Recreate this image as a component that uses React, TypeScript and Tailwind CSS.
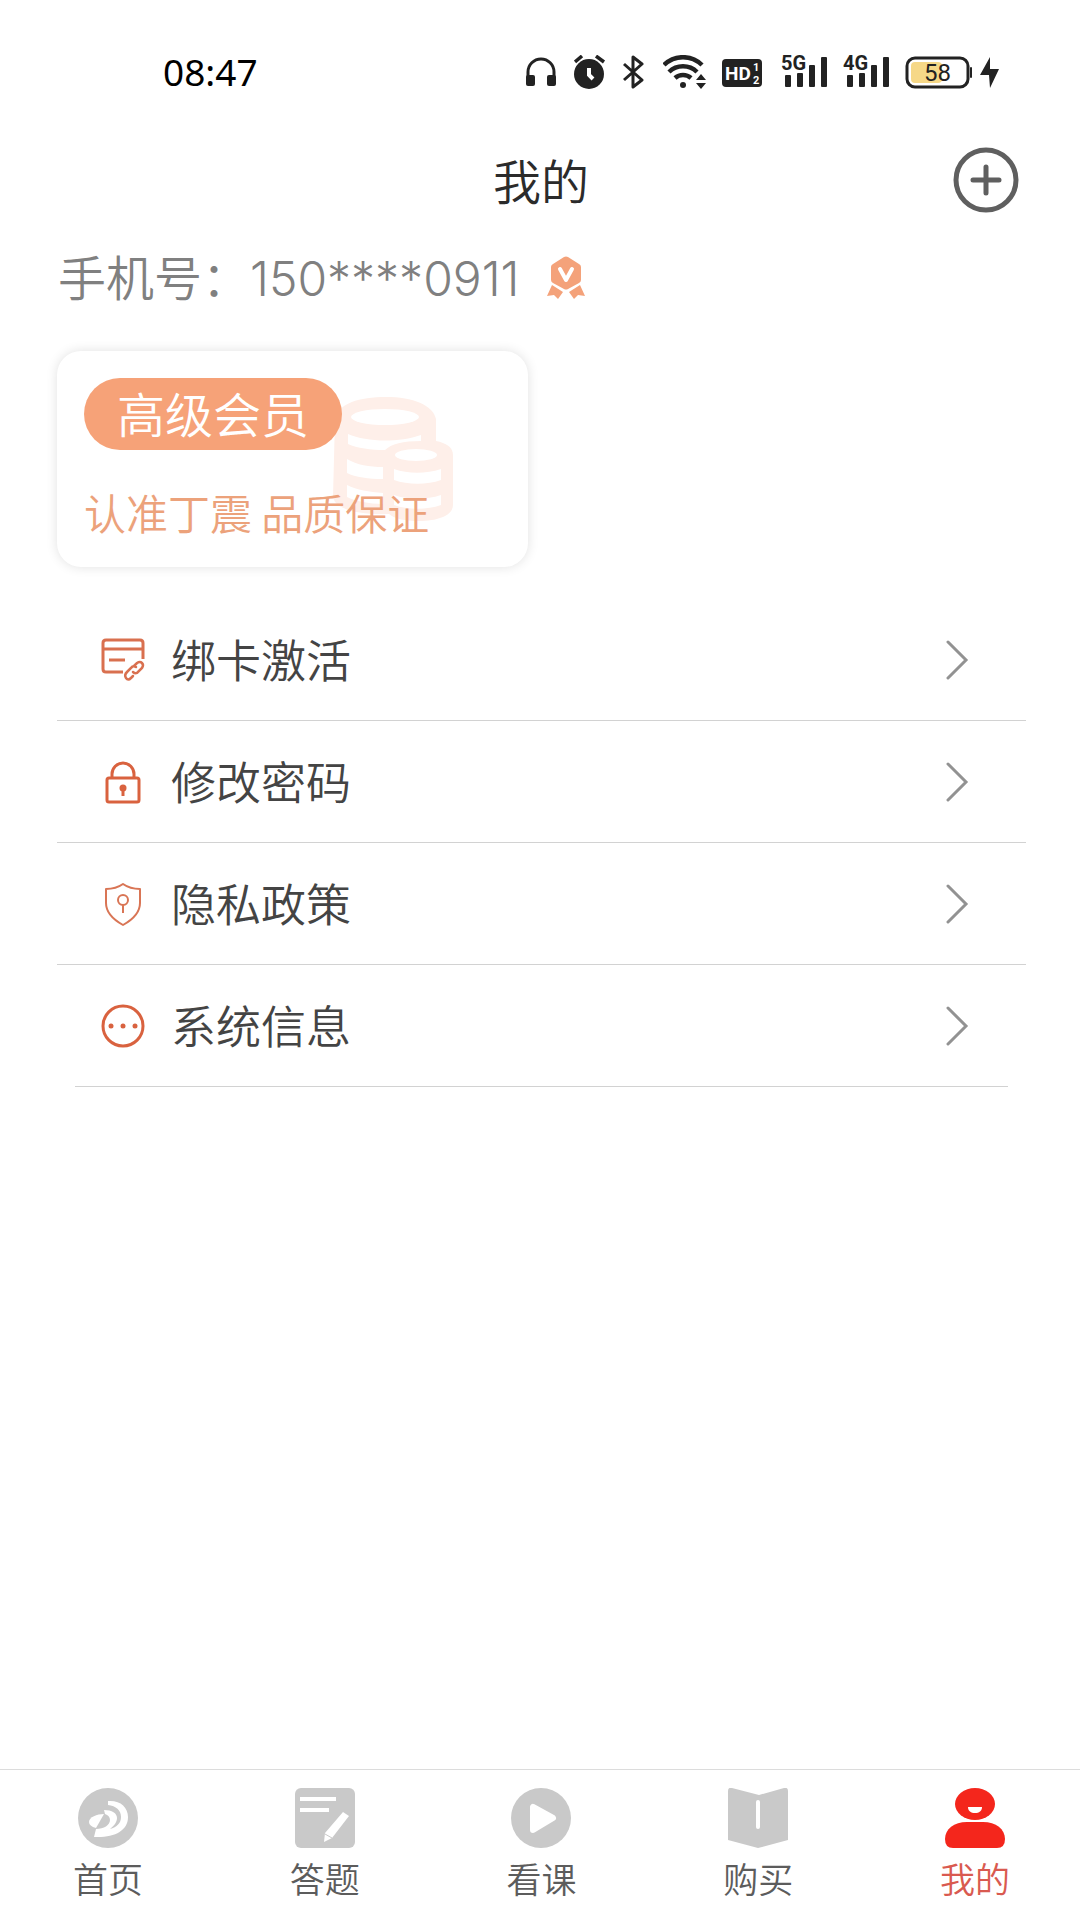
import type { ReactNode } from "react"

const StatusBar = () => {
  return (
    <div className="flex h-[42px] items-center justify-between pl-[163px] pr-20 text-[#222]">
      <span className="font-['Noto_Sans'] text-[37px] leading-[42px] font-normal text-black">08:47</span>
      <div className="flex items-center gap-4">
        <svg width="32" height="34" viewBox="0 0 32 34" fill="none">
          <path d="M2 24V17a13 13 0 0 1 26 0v7" stroke="currentColor" strokeWidth="3" />
          <rect x="0" y="20" width="9" height="11" rx="2" fill="currentColor" />
          <rect x="21" y="20" width="9" height="11" rx="2" fill="currentColor" />
        </svg>
        <svg width="33" height="34" viewBox="0 0 33 34" fill="none">
          <circle cx="15" cy="19" r="15" fill="currentColor" />
          <path d="M1 7l7-6M22 1l8 6" stroke="currentColor" strokeWidth="3.5" />
          <path d="M15 13v7l4 4" stroke="#fff" strokeWidth="4" />
        </svg>
        <svg width="24" height="34" viewBox="0 0 24 34" fill="none" stroke="currentColor" strokeWidth="3">
          <path d="M1 9l18 16-9 7V2l9 7L1 25" strokeLinejoin="round" />
        </svg>
        <svg width="43" height="34" viewBox="0 0 43 34" fill="none" stroke="currentColor" strokeWidth="4.5">
          <path d="M1 10a27 27 0 0 1 38 0M6 17a20 20 0 0 1 28 0M12 23a12 12 0 0 1 16 0" />
          <circle cx="20" cy="30" r="3" fill="currentColor" stroke="none" />
          <path d="M38 19l5 6H33zM38 34l-5-6h10z" fill="currentColor" stroke="none" />
        </svg>
        <svg width="43" height="34" viewBox="0 0 43 34" className="font-['Roboto'] font-bold" fill="#fff">
          <rect x="0" y="4" width="40" height="28" rx="4" fill="currentColor" />
          <text x="3" y="25" fontSize="19">HD</text>
          <text x="31" y="16" fontSize="11">1</text>
          <text x="31" y="29" fontSize="11">2</text>
        </svg>
        <Signal label="5G" />
        <Signal label="4G" />
        <div className="flex items-center gap-2">
          <svg width="67" height="34" viewBox="0 0 67 34" fill="none" className="font-['Roboto'] font-normal">
            <rect x="2" y="3" width="61" height="29" rx="8" stroke="currentColor" strokeWidth="3" />
            <rect x="6" y="7" width="31" height="21" rx="4" fill="#f6d887" />
            <rect x="65" y="12" width="2" height="11" rx="1" fill="currentColor" />
            <text x="19" y="26" fontSize="24" fill="#222">58</text>
          </svg>
          <svg width="20" height="34" viewBox="0 0 20 34" fill="currentColor">
            <path d="M10 2L0 20h9l1 13 9-19h-9z" />
          </svg>
        </div>
      </div>
    </div>
  )
}

const Signal = ({ label }: { label: string }) => {
  return (
    <svg width="46" height="42" viewBox="0 -4 46 42" fill="currentColor" className="font-['Roboto'] font-bold">
      <text x="0" y="15" fontSize="20">{label}</text>
      <rect x="4" y="20" width="6" height="12" rx="1" />
      <rect x="16" y="18" width="6" height="14" rx="1" />
      <rect x="28" y="10" width="6" height="22" rx="1" />
      <rect x="40" y="2" width="6" height="30" rx="1" />
    </svg>
  )
}

const Medal = () => {
  return (
    <svg width="38" height="43" viewBox="0 0 38 43" fill="#f4a27a" className="mt-1">
      <path d="M17 1q2-1 4 0l11 7q2 1 2 3v13q0 2-2 3l-11 6q-2 1-4 0L6 27q-2-1-2-3V11q0-2 2-3z" />
      <path d="M5 29l11 7-5 7-4-4-7 1zM33 29l-11 7 5 7 4-4 7 1z" />
      <path d="M13 13l6 11 6-11" fill="none" stroke="#fff" strokeWidth="4" strokeLinecap="round" strokeLinejoin="round" />
    </svg>
  )
}

const Coins = () => {
  return (
    <svg width="120" height="126" viewBox="0 0 120 126" fill="#feefe9" className="absolute left-[276px] top-[46px]">
      <path d="M2 22C6 6 26 0 53 0s47 8 50 22v22c10 2 17 6 17 14v50c0 10-14 16-34 16-14 0-24-2-30-7C24 118 2 112 0 100z" />
      <g fill="#fff">
        <ellipse cx="52" cy="20" rx="34" ry="8" />
        <path d="M15 37c18 8 50 9 73 1v6c-18 0-30 3-36 9-14 0-28-2-37-6z" />
        <path d="M14 62c10 6 22 8 36 8v12c-14 0-28-2-36-6zM14 88c10 5 22 7 36 8v11c-14 0-28-3-36-7z" />
        <ellipse cx="83" cy="58" rx="21" ry="6" />
        <path d="M61 72c14 5 32 5 47 0v11c-14 5-33 5-47 0zM61 98c14 5 32 5 47 0v10c-14 5-33 5-47 0z" />
      </g>
    </svg>
  )
}

const CardLinkIcon = () => (
  <svg width="48" height="48" viewBox="0 0 48 48" fill="none" stroke="#d9704f" strokeWidth="3">
    <path d="M24 36H7q-3 0-3-3V7q0-3 3-3h34q3 0 3 3v16M4 13h40M10 24h16" />
    <path d="M35 30l3-3q3-2 5 0t0 5l-5 5q-2 1-4-1M37 31q-3-2-5 1l-4 4q-3 3-1 6t5 0l2-2" strokeWidth="2.5" strokeLinecap="round" />
  </svg>
)

const LockIcon = () => (
  <svg width="48" height="48" viewBox="0 0 48 48" fill="none" stroke="#d9623f" strokeWidth="3">
    <path d="M13 20v-4a11 11 0 0 1 22 0v4" />
    <rect x="8" y="20" width="32" height="24" rx="2" />
    <circle cx="24" cy="30" r="3.5" fill="#d9623f" stroke="none" />
    <path d="M24 30v8" />
  </svg>
)

const ShieldIcon = () => (
  <svg width="48" height="48" viewBox="0 0 48 48" fill="none" stroke="#d97555" strokeWidth="2">
    <path d="M24 4q7 5 17 5v14c0 10-8 17-17 22C15 40 7 33 7 23V9q10 0 17-5z" strokeLinejoin="round" />
    <circle cx="24" cy="20" r="5" />
    <path d="M24 25v8" />
  </svg>
)

const DotsIcon = () => (
  <svg width="48" height="48" viewBox="0 0 48 48" fill="#d9623f">
    <circle cx="24" cy="24" r="20" fill="none" stroke="#d9623f" strokeWidth="3" />
    <circle cx="12" cy="24" r="2.5" />
    <circle cx="24" cy="24" r="2.5" />
    <circle cx="36" cy="24" r="2.5" />
  </svg>
)

const MenuRow = ({ icon, label }: { icon: ReactNode; label: string }) => {
  return (
    <button type="button" className="flex h-[121px] w-full items-center gap-6 pl-[42px] pr-[57px] text-left">
      {icon}
      <span className="flex-1 pb-0.5 text-[45px] leading-[60px] text-[#444]">{label}</span>
      <svg width="24" height="40" viewBox="0 0 24 40" fill="none" stroke="#929292" strokeWidth="3" strokeLinecap="round">
        <path d="M3 2l18 18L3 38" />
      </svg>
    </button>
  )
}

const menu = [
  { label: "绑卡激活", icon: <CardLinkIcon /> },
  { label: "修改密码", icon: <LockIcon /> },
  { label: "隐私政策", icon: <ShieldIcon /> },
  { label: "系统信息", icon: <DotsIcon /> },
]

const tabs = [
  {
    label: "首页",
    icon: (
      <>
        <circle cx="30" cy="30" r="30" />
        <path d="M30 13c12-1 20 6 20 16 0 14-14 21-34 20l2-8c8 0 14-4 14-9 0-3-2-5-5-6l-1-4c8 0 13 3 13 8 0 4-3 8-7 11 7-2 11-6 11-12 0-7-5-11-13-12z" fill="#fff" />
        <path d="M26 26l-8 14q-7-2-7-6c0-5 8-8 15-8z" fill="#fff" />
      </>
    ),
  },
  {
    label: "答题",
    icon: (
      <>
        <rect width="60" height="60" rx="6" />
        <path d="M5 9h36v4H5zM5 20h29v4H5zM48 24l6 4-17 22-8 4 1-9z" fill="#fff" />
        <path d="M30 46l7 4" stroke="#c9c9c9" />
      </>
    ),
  },
  {
    label: "看课",
    icon: (
      <>
        <circle cx="30" cy="30" r="30" />
        <path d="M22 19v23l20-12z" fill="#fff" stroke="#fff" strokeWidth="6" strokeLinejoin="round" />
      </>
    ),
  },
  {
    label: "购买",
    icon: (
      <>
        <path d="M0 3q0-4 4-3l27 7 25-7q4-1 4 3v49l-30 8-30-8z" />
        <path d="M30 14v25" stroke="#fff" strokeWidth="4" strokeLinecap="round" />
      </>
    ),
  },
  {
    label: "我的",
    icon: (
      <>
        <ellipse cx="30" cy="16" rx="20" ry="16" />
        <path d="M22 34h16c13 0 22 7 22 17q0 9-8 9H8q-8 0-8-9c0-10 9-17 22-17z" />
        <path d="M23 19h14c0 4-3 6-7 6s-7-2-7-6z" fill="#fff" />
      </>
    ),
  },
]

const App = () => {
  return (
    <div className="flex min-h-screen flex-col bg-white pt-[51px] font-['Noto_Sans_CJK_SC',sans-serif] font-[350]">
      <StatusBar />
      <header className="mt-[54px] grid grid-cols-3 items-center pl-[63px] pr-[61px]">
        <h1 className="col-start-2 pb-0.5 text-center text-5xl leading-[60px] text-[#2b2b2b]">我的</h1>
        <button type="button" aria-label="添加" className="justify-self-end">
          <svg width="66" height="66" viewBox="0 0 66 66" fill="none" stroke="#5f5f5f" strokeWidth="5" strokeLinecap="round">
            <circle cx="33" cy="33" r="30" />
            <path d="M33 20v26M20 33h26" />
          </svg>
        </button>
      </header>
      <main className="flex flex-1 flex-col pl-[57px] pr-[54px]">
        <div className="mt-8 flex items-center gap-7 pl-px">
          <p className="text-5xl leading-[60px] text-[#808080]">
            手机号：<span className="font-['Inter'] leading-none font-light">150****0911</span>
          </p>
          <Medal />
        </div>
        <section className="relative mt-[46px] w-[471px] rounded-3xl bg-white px-[27px] pb-[23px] pt-[27px] shadow-[0_0_12px_rgba(0,0,0,0.12)]">
          <Coins />
          <h2 className="relative w-fit rounded-full bg-[#f6a278] px-[33px] pb-1 text-5xl leading-[68px] text-white">高级会员</h2>
          <p className="relative mt-8 pb-0.5 text-[42px] leading-[60px] whitespace-nowrap text-[#eca27b]">认准丁震 品质保证</p>
        </section>
        <ul className="mt-8">
          {menu.map((item) => (
            <li key={item.label} className="group">
              <MenuRow icon={item.icon} label={item.label} />
              <div className="h-px bg-[#d2d2d2] group-last:mx-[18px]" />
            </li>
          ))}
        </ul>
      </main>
      <nav className="flex justify-between border-t border-[#dcdcdc] pb-[18px] pl-[73px] pr-[70px] pt-[18px]">
        {tabs.map((tab) => (
          <a key={tab.label} href="#" className="group flex flex-col items-center gap-1.5">
            <svg width="60" height="60" viewBox="0 0 60 60" className="fill-[#c9c9c9] group-last:fill-[#f4261c]">
              {tab.icon}
            </svg>
            <span className="text-[35px] leading-[48px] text-[#5c5c5c] group-last:text-[#d95a50]">{tab.label}</span>
          </a>
        ))}
      </nav>
    </div>
  )
}

export default App
